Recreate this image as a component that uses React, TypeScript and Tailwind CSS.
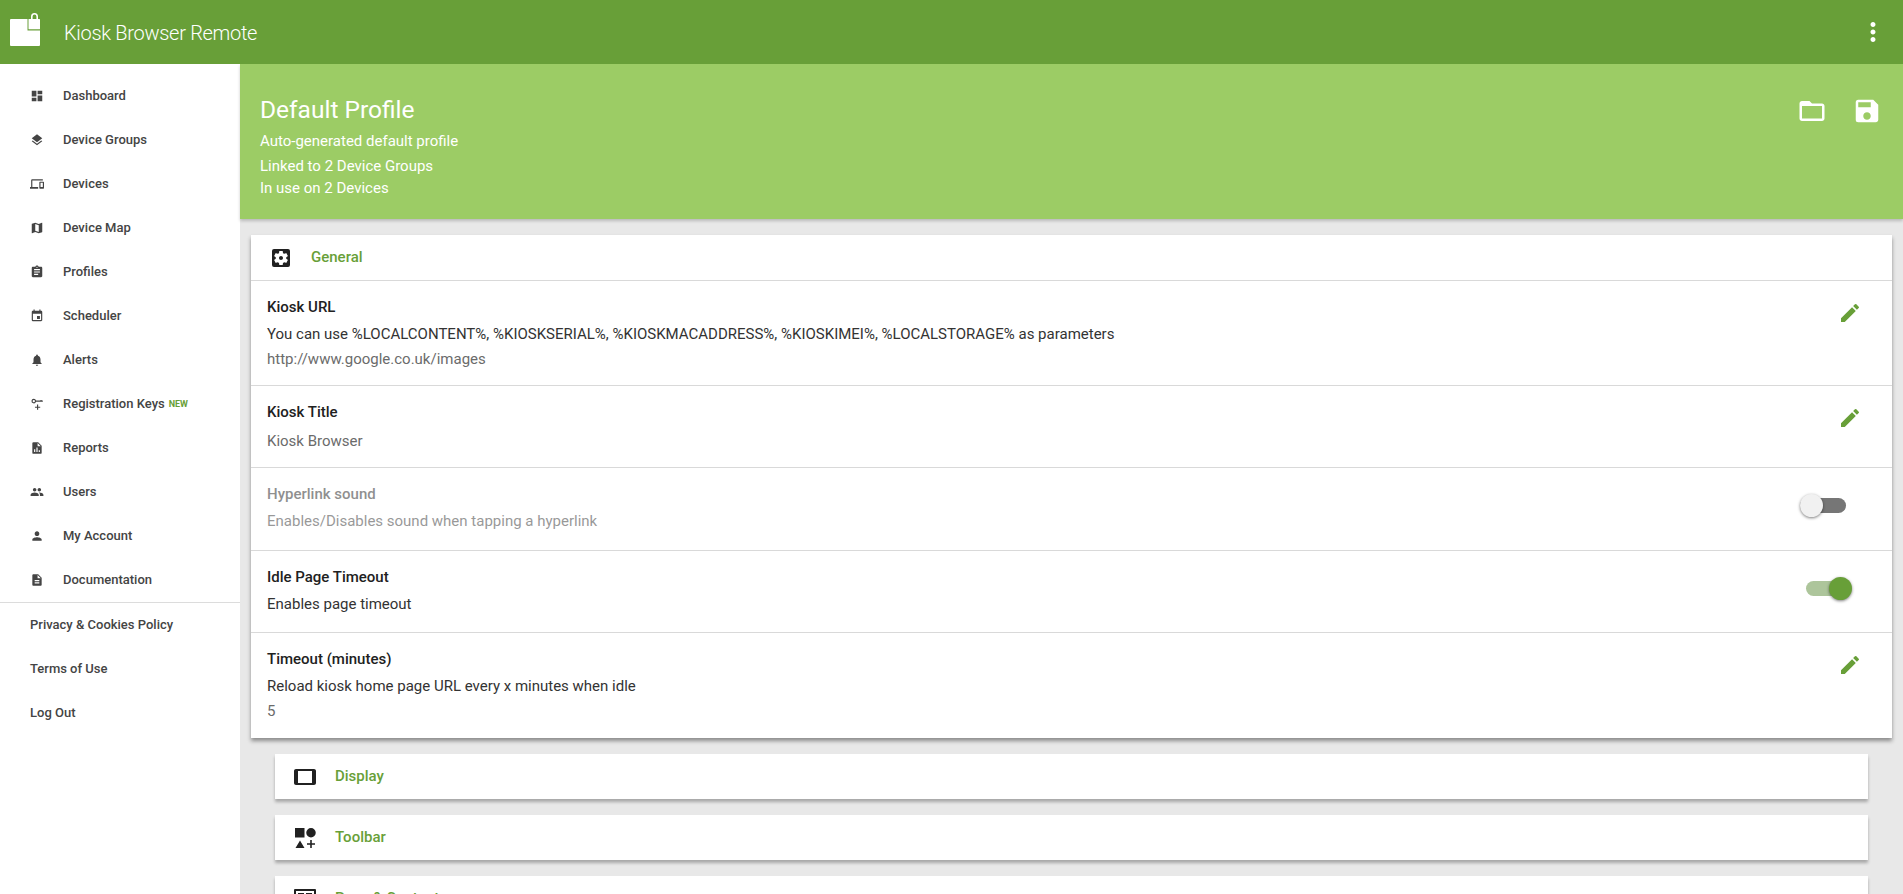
import React from "react";
import {
  MdDashboard, MdLayers, MdOutlineDevices, MdMap, MdAssignment, MdEvent, MdNotifications,
  MdPeople, MdPerson, MdDescription, MdEdit, MdSave, MdMoreVert, MdSettingsApplications, MdTablet,
} from "react-icons/md";

const nav: [React.ReactNode, string, boolean?][] = [
  [<MdDashboard />, "Dashboard"],
  [<MdLayers />, "Device Groups"],
  [<MdOutlineDevices />, "Devices"],
  [<MdMap />, "Device Map"],
  [<MdAssignment />, "Profiles"],
  [<MdEvent />, "Scheduler"],
  [<MdNotifications />, "Alerts"],
  [
    <svg viewBox="0 0 24 24" fill="currentColor"><path d="M6.500 3a4 4 0 1 0 3.800 5.200H22V6.200h-2V5h-2v1.200h-7.700A4 4 0 0 0 6.500 3zm0 2a2 2 0 1 1 0 4 2 2 0 0 1 0-4zM12 13v3.500H8.500v2H12V22h2v-3.500h3.500v-2H14V13z" /></svg>,
    "Registration Keys",
    true,
  ],
  [
    <svg viewBox="0 0 24 24" fill="currentColor"><path d="M14 2H6a2 2 0 0 0-2 2v16a2 2 0 0 0 2 2h12a2 2 0 0 0 2-2V8l-6-6zM9 19H7v-5h2v5zm4 0h-2v-8h2v8zm4 0h-2v-3h2v3zM13 9V3.500L18.500 9H13z" /></svg>,
    "Reports",
  ],
  [<MdPeople />, "Users"],
  [<MdPerson />, "My Account"],
  [<MdDescription />, "Documentation"],
];

function Row({ title, sub, value, action, muted, last, h }: { title: string; sub?: string; value?: string; action: React.ReactNode; muted?: boolean; last?: boolean; h: string }) {
  return (
    <div className={`flex justify-between pl-[16px] ${h} ${last ? "" : "border-b border-[#d9d9d9]"}`}>
      <div className={`pt-[16px] text-[15px] leading-[20px] ${muted ? "opacity-50" : ""}`}>
        <div className="font-medium text-[#212121]">{title}</div>
        {sub && <div className="mt-[7px] text-[#333333]">{sub}</div>}
        {value && <div className={`${sub ? "mt-[5px]" : "mt-[9px]"} text-[#6b6b6b]`}>{value}</div>}
      </div>
      {action}
    </div>
  );
}

const Pencil = () => (
  <div className="pt-[20px] pr-[30px]">
    <MdEdit className="text-[24px] text-[#689f38]" />
  </div>
);

function Section({ icon, label }: { icon: React.ReactNode; label: string }) {
  return (
    <div className="mx-[35px] mt-[16px] flex h-[45px] shrink-0 items-center bg-white shadow-[0_3px_3px_rgba(0,0,0,0.28)]">
      <div className="ml-[18px] h-[24px] w-[24px] text-[24px] text-[#212121]">{icon}</div>
      <div className="ml-[18px] text-[15px] font-medium text-[#689f38]">{label}</div>
    </div>
  );
}

export default function App() {
  return (
    <div className="flex h-[894px] flex-col overflow-hidden bg-[#e8e8e8] font-['Roboto',sans-serif]">
      <header className="z-10 flex h-[64px] shrink-0 items-center justify-between bg-[#689f38] text-white">
        <div className="flex h-full items-center">
          <svg viewBox="0 0 30 33" className="ml-[10px] mt-[13px] h-[33px] w-[30px] self-start" fill="white">
            <path d="M1 6h16.500v11.500H30V32a1 1 0 0 1-1 1H1a1 1 0 0 1-1-1V7a1 1 0 0 1 1-1z" />
            <rect x="18.500" y="6" width="11.500" height="10.300" rx="0.500" />
            <path d="M21 6.500V3.500a3.500 3.500 0 0 1 7 0v3h-1.600v-3a1.900 1.900 0 0 0-3.800 0v3z" />
          </svg>
          <div className="ml-[24px] mt-[1px] text-[20px] font-light tracking-[-0.3px]">Kiosk Browser Remote</div>
        </div>
        <MdMoreVert className="mr-[15px] text-[30px]" />
      </header>
      <div className="flex min-h-0 flex-1">
        <aside className="w-[240px] shrink-0 bg-white">
          <nav className="border-b border-[#dcdcdc] pt-[9.500px]">
            {nav.map(([icon, label, isNew]) => (
              <div key={label} className="flex h-[44px] items-center text-[13px] font-medium text-[#444444]">
                <span className="ml-[30px] flex h-[14px] w-[14px] text-[14px] [&>svg]:h-[14px] [&>svg]:w-[14px]">{icon}</span>
                <span className="ml-[19px]">{label}</span>
                {isNew && <span className="ml-[4px] mt-[2px] text-[9px] font-bold text-[#689f38]">NEW</span>}
              </div>
            ))}
          </nav>
          <div>
            {["Privacy & Cookies Policy", "Terms of Use", "Log Out"].map((t) => (
              <div key={t} className="flex h-[44px] items-center pl-[30px] text-[13px] font-medium text-[#444444]">{t}</div>
            ))}
          </div>
        </aside>
        <main className="flex min-w-0 flex-1 flex-col">
          <section className="flex h-[155px] shrink-0 justify-between bg-[#9ccc65] pl-[20px] text-white shadow-[0_2px_3px_rgba(0,0,0,0.2)]">
            <div>
              <div className="mt-[29px] text-[24.500px] leading-[34px]">Default Profile</div>
              <div className="mt-[4px] text-[15px] leading-[20px]">Auto-generated default profile</div>
              <div className="mt-[5px] text-[15px] leading-[20px]">Linked to 2 Device Groups</div>
              <div className="mt-[2px] text-[15px] leading-[20px]">In use on 2 Devices</div>
            </div>
            <div className="mr-[21px] mt-[32px] flex gap-[25.500px]">
              <svg viewBox="0 0 24 24" className="h-[30px] w-[30px]" fill="white"><path d="M10 4H4c-1.100 0-2 .9-2 2v12c0 1.100.9 2 2 2h16c1.100 0 2-.9 2-2V8c0-1.100-.9-2-2-2h-8l-2-2zm10 14H4V8h16v10z" /></svg>
              <MdSave className="h-[30px] w-[30px]" />
            </div>
          </section>
          <div className="mx-[11px] mt-[16px] shrink-0 bg-white shadow-[0_3px_4px_rgba(0,0,0,0.4)]">
            <div className="flex h-[46px] items-center border-b border-[#d9d9d9]">
              <MdSettingsApplications className="ml-[18px] text-[24px] text-[#212121]" />
              <div className="ml-[18px] text-[15px] font-medium text-[#689f38]">General</div>
            </div>
            <Row h="h-[105px]" title="Kiosk URL" sub="You can use %LOCALCONTENT%, %KIOSKSERIAL%, %KIOSKMACADDRESS%, %KIOSKIMEI%, %LOCALSTORAGE% as parameters" value="http://www.google.co.uk/images" action={<Pencil />} />
            <Row h="h-[82px]" title="Kiosk Title" value="Kiosk Browser" action={<Pencil />} />
            <Row h="h-[83px]" muted title="Hyperlink sound" sub="Enables/Disables sound when tapping a hyperlink" action={
              <div className="relative mr-[46px] mt-[30px] h-[15px] w-[46px] rounded-full bg-[#767676]">
                <div className="absolute left-0 top-[-4px] h-[23px] w-[23px] rounded-full bg-[#f1f1f1] shadow-[0_1px_3px_rgba(0,0,0,0.5)]" />
              </div>
            } />
            <Row h="h-[82px]" title="Idle Page Timeout" sub="Enables page timeout" action={
              <div className="relative mr-[42px] mt-[30px] h-[15px] w-[44px] rounded-full bg-[#adc59b]">
                <div className="absolute right-[-2px] top-[-4px] h-[23px] w-[23px] rounded-full bg-[#689f38] shadow-[0_1px_3px_rgba(0,0,0,0.5)]" />
              </div>
            } />
            <Row last h="h-[105px]" title="Timeout (minutes)" sub="Reload kiosk home page URL every x minutes when idle" value="5" action={<Pencil />} />
          </div>
          <Section icon={<MdTablet />} label="Display" />
          <Section icon={
            <svg viewBox="0 0 24 24" fill="currentColor" className="h-[24px] w-[24px]"><path d="M2 2h9.500v9.500H2zM18 2a4.500 4.500 0 1 1 0 9.500A4.500 4.500 0 0 1 18 2zM7 14.500L11.500 22h-9zM17.200 14h1.600v3.200H22v1.600h-3.200V22h-1.600v-3.200H14v-1.600h3.200z" /></svg>
          } label="Toolbar" />
          <Section icon={
            <svg viewBox="0 0 24 24" fill="currentColor" className="h-[24px] w-[24px]"><path d="M2 2h20a1 1 0 0 1 1 1v18a1 1 0 0 1-1 1H2a1 1 0 0 1-1-1V3a1 1 0 0 1 1-1zm1 2v16h18V4zm2 2h6v2H5zm8 0h6v2h-6z" /></svg>
          } label="Page & Content" />
        </main>
      </div>
    </div>
  );
}
